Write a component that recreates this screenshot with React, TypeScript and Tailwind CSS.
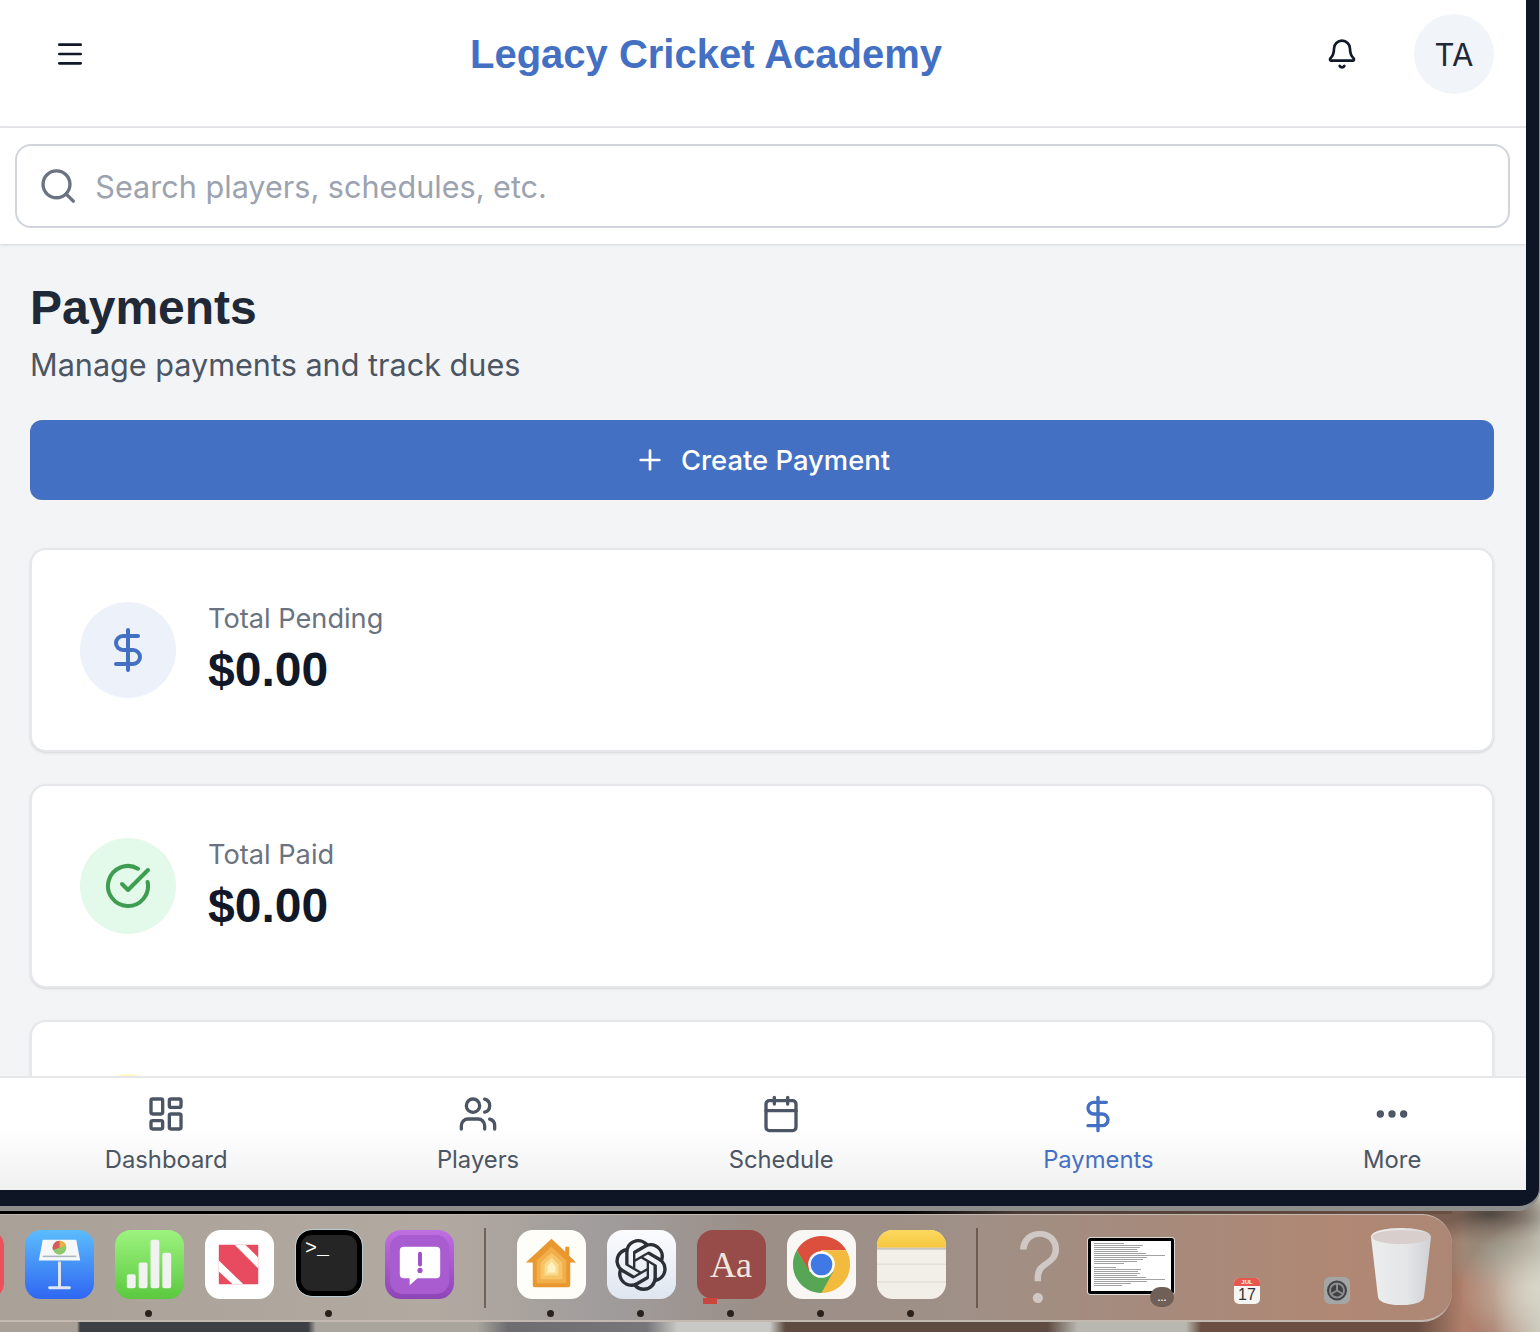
import { ReactNode } from "react";
import {
  Bell,
  Calendar,
  CircleCheckBig,
  DollarSign,
  Ellipsis,
  LayoutDashboard,
  Menu,
  Plus,
  Search,
  Users,
} from "lucide-react";
import { SiOpenai } from "react-icons/si";

function StatCard({ icon, circle, label }: { icon?: ReactNode; circle: string; label?: string }) {
  return (
    <div className="flex shrink-0 items-center gap-8 rounded-2xl border-2 border-[#e5e7eb] bg-white px-12 py-[48px] shadow-sm">
      <div className={`flex h-24 w-24 shrink-0 items-center justify-center rounded-full ${circle}`}>{icon}</div>
      <div className="flex h-[104px] flex-col">
        {label && (
          <>
            <p className="pt-px text-[27.2px] leading-10 text-[#6b7280]">{label}</p>
            <p className="mt-[1px] font-['Liberation_Sans',sans-serif] text-5xl leading-[60px] font-bold text-[#111827]">$0.00</p>
          </>
        )}
      </div>
    </div>
  );
}

function NavItem({ icon, label, active }: { icon: ReactNode; label: string; active?: boolean }) {
  return (
    <div className={`flex flex-col items-center gap-[10px] ${active ? "text-[#4470c4]" : "text-[#4b5563]"}`}>
      {icon}
      <span className="text-[23.8px] leading-8">{label}</span>
    </div>
  );
}

function Slot({ className, dot, children }: { className: string; dot?: boolean; children: ReactNode }) {
  return (
    <div className={`relative flex h-[107px] shrink-0 flex-col items-center ${className}`}>
      {children}
      {dot && <span className="absolute top-[95px] h-[7px] w-[7px] -translate-x-px rounded-full bg-[#2a211d]" />}
    </div>
  );
}

function KeynoteIcon() {
  return (
    <svg width="69" height="69" viewBox="0 0 70 70">
      <defs>
        <linearGradient id="kn" x1="0" y1="0" x2="0" y2="1">
          <stop offset="0" stopColor="#5cbcfd" />
          <stop offset="1" stopColor="#2f66f2" />
        </linearGradient>
      </defs>
      <rect width="70" height="70" rx="16" fill="url(#kn)" />
      <path d="M18 10h34l4 21H14z" fill="#f6f7f8" />
      <rect x="18" y="26" width="34" height="1.5" fill="#a9b4c0" />
      <circle cx="35" cy="18" r="7" fill="#8fc96a" />
      <path d="M35 18V11a7 7 0 0 1 6.6 4.6z" fill="#e8b04a" />
      <path d="M35 18V11a7 7 0 0 0-6.6 9.3z" fill="#d95a5a" />
      <rect x="33.5" y="32" width="3" height="26" fill="#dfe6ee" />
      <rect x="23.5" y="57" width="23" height="3" rx="1.5" fill="#dfe6ee" />
    </svg>
  );
}

function NumbersIcon() {
  return (
    <svg width="69" height="69" viewBox="0 0 70 70">
      <defs>
        <linearGradient id="nm" x1="0" y1="0" x2="0" y2="1">
          <stop offset="0" stopColor="#9df37f" />
          <stop offset="1" stopColor="#5bc93f" />
        </linearGradient>
      </defs>
      <rect width="70" height="70" rx="16" fill="url(#nm)" />
      <rect x="12" y="45" width="9" height="14" rx="2" fill="#f0f3ef" />
      <rect x="24" y="33" width="9" height="26" rx="2" fill="#f0f3ef" />
      <rect x="36" y="10" width="9" height="49" rx="2" fill="#f0f3ef" />
      <rect x="48" y="23" width="9" height="36" rx="2" fill="#f0f3ef" />
    </svg>
  );
}

function NewsIcon() {
  return (
    <svg width="69" height="69" viewBox="0 0 70 70">
      <rect width="70" height="70" rx="16" fill="#fff" />
      <rect x="14" y="15" width="40" height="40" rx="1" fill="#e84a60" />
      <path d="M30 15h11l13 13v11zM14 31l25 24H28L14 42z" fill="#fff" />
    </svg>
  );
}

function FeedbackIcon() {
  return (
    <svg width="69" height="69" viewBox="0 0 70 70">
      <defs>
        <linearGradient id="fb" x1="0" y1="0" x2="0" y2="1">
          <stop offset="0" stopColor="#c06fe2" />
          <stop offset="1" stopColor="#8d45b5" />
        </linearGradient>
      </defs>
      <rect width="70" height="70" rx="16" fill="url(#fb)" />
      <rect x="5" y="5" width="60" height="60" rx="13" fill="#a95bd0" />
      <path d="M19 17h33a4 4 0 0 1 4 4v24a4 4 0 0 1-4 4H33l-8 7v-7h-6a4 4 0 0 1-4-4V21a4 4 0 0 1 4-4z" fill="#fff" />
      <rect x="33.5" y="22" width="4" height="15" rx="2" fill="#a04fc9" />
      <circle cx="35.5" cy="41" r="2.6" fill="#a04fc9" />
    </svg>
  );
}

function HomeIcon() {
  return (
    <svg width="69" height="69" viewBox="0 0 70 70">
      <rect width="70" height="70" rx="16" fill="#fffdf8" />
      <path d="M35 9L49 22v-5h4v9l7 7h-6v23a2 2 0 0 1-2 2H18a2 2 0 0 1-2-2V33H9z" fill="#e9982f" />
      <path d="M35 17L50 31v23H20V31z" fill="#f2ae4a" />
      <path d="M35 23L46 33v17H24V33z" fill="#f7c468" />
      <path d="M35 28L42 35v11H28V35z" fill="#fbdb90" />
      <path d="M35 32L39 37v6H31v-6z" fill="#fff3c4" />
    </svg>
  );
}

function ChromeIcon() {
  return (
    <svg width="69" height="69" viewBox="0 0 70 70">
      <rect width="70" height="70" rx="16" fill="#f8f7f3" />
      <path d="M60.1 20.5A29 29 0 0 0 9.9 20.5L22 42l13-21.5z" fill="#db4f3c" />
      <path d="M60.1 20.5H35L46 40 35 64a29 29 0 0 0 25.1-43.5z" fill="#f3bb3e" />
      <path d="M9.9 20.5A29 29 0 0 0 35 64l12-22H23z" fill="#57a655" />
      <circle cx="35" cy="35" r="13.5" fill="#fff" />
      <circle cx="35" cy="35" r="11" fill="#4079e6" />
    </svg>
  );
}

function NotesIcon() {
  return (
    <svg width="69" height="69" viewBox="0 0 70 70">
      <defs>
        <linearGradient id="nt" x1="0" y1="0" x2="0" y2="1">
          <stop offset="0" stopColor="#fbd95f" />
          <stop offset="1" stopColor="#f6c63f" />
        </linearGradient>
        <clipPath id="ntc">
          <rect width="70" height="70" rx="16" />
        </clipPath>
      </defs>
      <g clipPath="url(#ntc)">
        <rect width="70" height="70" fill="#f1efe8" />
        <rect width="70" height="18" fill="url(#nt)" />
        <rect y="18" width="70" height="2" fill="#c6c4bd" />
        <rect y="34" width="70" height="1.5" fill="#e2e0d9" />
        <rect y="52" width="70" height="1.5" fill="#e2e0d9" />
      </g>
    </svg>
  );
}

function TerminalTile() {
  const rows = [40, 66, 62, 58, 60, 70, 96, 72, 66, 58, 40, 0, 30, 64, 60, 62, 58, 70, 96, 72, 50, 38];
  return (
    <div className="h-[56px] w-[86px] rounded-[2px] border-[3px] border-black bg-white px-[3px] pt-[2px] outline outline-[#d8d8d8]">
      {rows.map((w, i) => (
        <div key={i} className="mb-px h-px bg-[#a3a3a3]" style={{ width: `${w}%` }} />
      ))}
    </div>
  );
}

function TrashIcon() {
  return (
    <svg width="64" height="78" viewBox="0 0 64 78">
      <defs>
        <linearGradient id="tr" x1="0" y1="0" x2="1" y2="0">
          <stop offset="0" stopColor="#eceded" />
          <stop offset="0.6" stopColor="#e4e5e7" />
          <stop offset="1" stopColor="#cfd1d4" />
        </linearGradient>
      </defs>
      <path d="M2 10c0-12 60-12 60 0l-7 60c-1 11-45 11-46 0z" fill="url(#tr)" />
      <ellipse cx="32" cy="10" rx="29" ry="7" fill="#d8cfcd" />
    </svg>
  );
}

export default function App() {
  return (
    <div className="relative h-[1332px] w-[1540px] overflow-hidden bg-[radial-gradient(80px_70px_at_1540px_1290px,#d8d6c8,transparent),radial-gradient(70px_40px_at_1500px_1250px,#8f8d7f,transparent),radial-gradient(70px_30px_at_1490px_1215px,#48423c,transparent),linear-gradient(90deg,#a8a096_5%,#3c3f44_5.2%,#3c3f44_20%,#a9a59c_20.5%,#a9a59c_31%,#6d6c70_33%,#77767a_42%,#c8c8c4_44%,#c8c8c4_50%,#5e4b42_51%,#5e4b42_68%,#b9b8b0_70%,#b9b8b0_77%,#6a4f42_78%,#6a4f42_92%,#b0806c_95%,#a87a68_97%,#c8c5b8)] font-[Inter,sans-serif]">
      <div className="h-[1211px] overflow-hidden rounded-br-[22px] border-r border-b-[5px] border-[#8d8d8c] bg-[#0e1525]">
        <div className="flex h-[1190px] w-[1526px] flex-col bg-[#f3f4f6]">
          <header className="flex h-[128px] shrink-0 items-center justify-between border-b-2 border-[#e5e7eb] bg-white px-8 pb-[18px]">
            <button className="p-[22px] text-[#111827]">
              <Menu size={32} strokeWidth={2} />
            </button>
            <h1 className="font-['Liberation_Sans',sans-serif] text-[40px] leading-[48px] font-bold text-[#4470c4]">Legacy Cricket Academy</h1>
            <div className="flex items-center gap-[34px]">
              <button className="p-[22px] text-[#111827]">
                <Bell size={32} strokeWidth={2} />
              </button>
              <div className="flex h-20 w-20 items-center justify-center rounded-full bg-[#f1f5f9] pt-[2px] text-[31px] text-[#1f2937]">TA</div>
            </div>
          </header>

          <div className="shrink-0 bg-white px-[15px] py-4 shadow-sm">
            <div className="flex h-[84px] w-[1495px] items-center gap-[17px] rounded-2xl border-2 border-[#d1d5db] bg-white pl-[21px]">
              <Search size={42} strokeWidth={2} className="text-[#6b7280]" />
              <input
                readOnly
                placeholder="Search players, schedules, etc."
                className="w-full bg-transparent pt-[2px] text-[30.6px] outline-none placeholder:text-[#9ca3af]"
              />
            </div>
          </div>

          <main className="flex min-h-0 flex-1 flex-col overflow-hidden px-[30px] pt-[34px]">
            <h2 className="font-['Liberation_Sans',sans-serif] text-5xl leading-[60px] font-bold text-[#1f2937]">Payments</h2>
            <p className="mt-[3px] text-[30.6px] leading-[48px] text-[#4b5563]">Manage payments and track dues</p>
            <button className="mt-[31px] flex h-20 w-[1464px] shrink-0 items-center justify-center gap-[15px] rounded-xl bg-[#4470c4] text-[27.4px] font-medium text-white">
              <Plus size={32} strokeWidth={2} />
              <span className="pt-px">Create Payment</span>
            </button>
            <div className="mt-[48px] flex w-[1464px] flex-col gap-[32px]">
              <StatCard circle="bg-[#ecf1fa]" label="Total Pending" icon={<DollarSign size={48} strokeWidth={2} className="text-[#4470c4]" />} />
              <StatCard circle="bg-[#e3f9e9]" label="Total Paid" icon={<CircleCheckBig size={48} strokeWidth={2} className="text-[#3f9d52]" />} />
              <StatCard circle="bg-[#fef9c3]" />
            </div>
          </main>

          <nav className="flex h-[114px] shrink-0 items-start justify-around border-t-2 border-[#e5e7eb] bg-[linear-gradient(#fff_45%,#f0f0f1)] pt-[16px]">
            <NavItem label="Dashboard" icon={<LayoutDashboard size={40} strokeWidth={2} />} />
            <NavItem label="Players" icon={<Users size={40} strokeWidth={2} />} />
            <NavItem label="Schedule" icon={<Calendar size={40} strokeWidth={2} />} />
            <NavItem label="Payments" active icon={<DollarSign size={40} strokeWidth={2} />} />
            <NavItem label="More" icon={<Ellipsis size={40} strokeWidth={2.4} />} />
          </nav>
        </div>
      </div>

      <div className="h-[3px] w-[1452px] bg-[linear-gradient(90deg,#000_62%,#4a3c35_70%,#6a4f42)]" />
      <div className="flex h-[108px] w-[1452px] rounded-r-[30px] border-t border-b-2 border-[#c4b9b0] bg-[linear-gradient(90deg,#a9a098,#b2a9a0_30%,#a09c9c_42%,#9b8f88_52%,#9f9087_65%,#a58b7d_78%,#b08874_92%,#ad8775)]">
        <Slot className="-ml-[76px] w-[90px] pt-[15px]">
          <div className="h-[69px] w-[69px] rounded-2xl bg-[#ee4f5c]" />
        </Slot>
        <Slot className="w-[90px] pt-[15px]"><KeynoteIcon /></Slot>
        <Slot className="w-[90px] pt-[15px]" dot><NumbersIcon /></Slot>
        <Slot className="w-[90px] pt-[15px]"><NewsIcon /></Slot>
        <Slot className="w-[90px] pt-[15px]" dot>
          <div className="h-[66px] w-[66px] rounded-2xl border-[5px] border-black bg-[#252525] pt-[2px] pl-[4px] font-['Liberation_Mono',monospace] text-[20px] leading-6 text-white outline outline-[#b7ccd3]">&gt;_</div>
        </Slot>
        <Slot className="w-[90px] pt-[15px]"><FeedbackIcon /></Slot>
        <div className="flex w-[42px] shrink-0 justify-center pt-[13px]"><div className="h-[80px] w-[2px] bg-[#6f625b]" /></div>
        <Slot className="w-[90px] pt-[15px]" dot><HomeIcon /></Slot>
        <Slot className="w-[90px] pt-[15px]" dot>
          <div className="flex h-[69px] w-[69px] items-center justify-center rounded-2xl bg-[linear-gradient(#fbfcfe,#dfe6f0)] text-[#2b3036]"><SiOpenai size={52} /></div>
        </Slot>
        <Slot className="w-[90px] pt-[15px]" dot>
          <div className="relative flex h-[69px] w-[69px] items-center justify-center rounded-2xl bg-[#984c4a] font-['Liberation_Serif',serif] text-[36px] text-[#efe6de]">
            Aa
            <span className="absolute top-[68px] left-[6px] h-[6px] w-[14px] bg-[#c9453d]" />
          </div>
        </Slot>
        <Slot className="w-[90px] pt-[15px]" dot><ChromeIcon /></Slot>
        <Slot className="w-[90px] pt-[15px]" dot><NotesIcon /></Slot>
        <div className="flex w-[42px] shrink-0 justify-center pt-[13px]"><div className="h-[80px] w-[2px] bg-[#6f5a50]" /></div>
        <Slot className="w-[84px]">
          <span className="font-[Inter,sans-serif] text-[96px] leading-[104px] font-light text-[#cfc8c4]">?</span>
        </Slot>
        <Slot className="w-[98px] pt-[23px]">
          <TerminalTile />
          <span className="absolute top-[72px] right-[6px] flex h-[20px] w-[24px] items-center justify-center rounded-full bg-[#6f5f57] text-[9px] leading-none font-bold text-white">...</span>
        </Slot>
        <Slot className="w-[134px] pt-[63px]">
          <div className="h-[26px] w-[26px] overflow-hidden rounded-[5px] bg-[#f5f5f3] text-center font-['Liberation_Sans',sans-serif]">
            <div className="h-[8px] bg-[#e8574f] text-[6px] leading-[8px] font-bold text-white">JUL</div>
            <div className="text-[16px] leading-[18px] text-[#333]">17</div>
          </div>
        </Slot>
        <Slot className="w-[46px] pt-[62px]">
          <svg width="26" height="27" viewBox="0 0 26 27">
            <rect width="26" height="27" rx="6" fill="#a4a5a5" />
            <circle cx="13" cy="13.5" r="10" fill="#3f4143" />
            <circle cx="13" cy="13.5" r="7" fill="none" stroke="#8a8c8e" strokeWidth="2" />
            <path d="M13 6.5v7l6 3.5M13 13.5l-6 3.5" stroke="#8a8c8e" strokeWidth="2" fill="none" />
          </svg>
        </Slot>
        <Slot className="w-[82px] pt-[12px]"><TrashIcon /></Slot>
      </div>
    </div>
  );
}
